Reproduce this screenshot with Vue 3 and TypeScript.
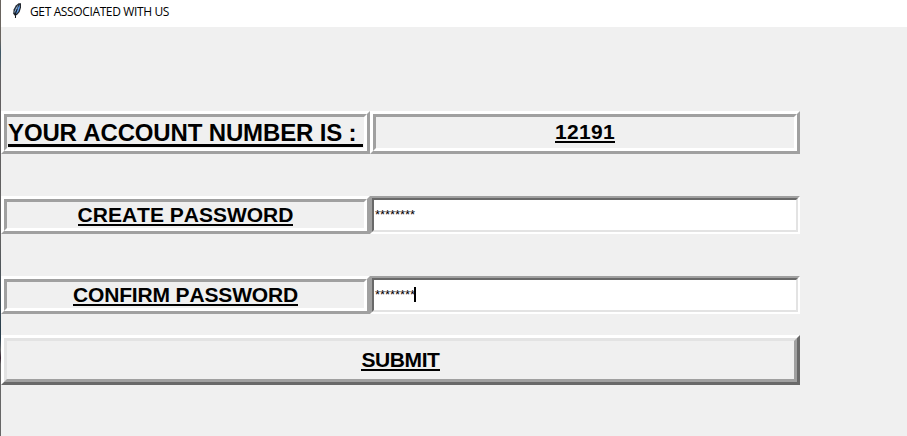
<script setup lang="ts">
import { ref } from 'vue'

const title = 'GET ASSOCIATED WITH US'
const accountNumber = ref('12191')
const password = ref('********')
const confirmation = ref('********')
</script>

<template>
  <div class="window">
    <header class="titlebar">
      <svg class="feather" width="10" height="16" viewBox="0 0 10 16">
        <path d="M7.6 0.2 L10 0.2 L10 4.6 L8.6 9 L6 12 L3.4 12.6 L2.2 10.6 L2.6 6.4 L4.8 2.6 Z" fill="#23282f" />
        <path d="M8.6 1.4 L8.8 4.6 L7.4 8.4 L5.2 11 L4.4 9.8 L7 5 Z" fill="#5f9ff0" />
        <path d="M7.4 1.6 L5 4.8 L3.4 8.5 L3.6 10 L6 6 Z" fill="#86a9d0" />
        <path d="M6.2 6 L4.8 10 L4.4 15" fill="none" stroke="#101318" stroke-width="1" />
      </svg>
      <span class="title">{{ title }}</span>
    </header>
    <main class="form">
      <div class="row account">
        <div class="ridge label"><span class="text big">YOUR ACCOUNT NUMBER IS :&nbsp;</span></div>
        <div class="ridge value"><span class="text number">{{ accountNumber }}</span></div>
      </div>
      <div class="row create">
        <div class="ridge label"><span class="text">CREATE PASSWORD</span></div>
        <div class="entry"><span class="mask">{{ password }}</span></div>
      </div>
      <div class="row confirm">
        <div class="ridge label"><span class="text tight">CONFIRM PASSWORD</span></div>
        <div class="entry"><span class="mask">{{ confirmation }}</span><i class="caret"></i></div>
      </div>
      <button class="submit" type="button"><span class="inner"><span class="text button-text">SUBMIT</span></span></button>
    </main>
  </div>
</template>

<style>
body {
  margin: 0;
  overflow: hidden;
}
</style>

<style scoped>
.window {
  box-sizing: border-box;
  width: 907px;
  height: 436px;
  background: linear-gradient(#69645f 0 40px, #3f5967 52px, #625f60 75px, #606060 240px, #263c4c 338px, #666 350px, #35202e 358px, #666 364px);
  padding-left: 1px;
  display: flex;
  flex-direction: column;
  font-family: "Liberation Sans", Arial, sans-serif;
  color: #000;
}
.titlebar {
  height: 27px;
  background: #fff;
  display: flex;
  align-items: flex-start;
}
.feather {
  margin: 3px 0 0 10px;
  flex: none;
}
.title {
  margin-left: 9px;
  font: 12px/24px "Open Sans", "Noto Sans", sans-serif;
  letter-spacing: -0.37px;
  white-space: nowrap;
}
.form {
  flex: 1;
  background: #f0f0f0;
  padding-top: 84px;
}
.row {
  display: grid;
  grid-template-columns: 369px 430px;
  width: 799px;
}
.account {
  height: 43px;
}
.create {
  height: 38px;
  margin-top: 42px;
}
.confirm {
  height: 38px;
  margin-top: 42px;
}
.ridge {
  box-sizing: border-box;
  border: 3px solid;
  border-color: #fff #a0a0a0 #a0a0a0 #fff;
  position: relative;
  display: flex;
  justify-content: center;
  align-items: flex-start;
}
.ridge::before {
  content: "";
  position: absolute;
  inset: 0;
  border: 3px solid;
  border-color: #a0a0a0 #fff #fff #a0a0a0;
}
.text {
  font-size: 21px;
  font-weight: bold;
  font-kerning: none;
  line-height: 24px;
  height: 21px;
  border-bottom: 2px solid #000;
  white-space: nowrap;
}
.label .text {
  margin-top: 4px;
}
.label .big {
  margin-top: 5px;
  font-size: 24px;
  line-height: 27px;
  height: 25px;
  border-bottom-width: 3px;
  letter-spacing: -0.15px;
}
.number {
  margin-top: 6px;
  letter-spacing: 0.32px;
}
.label .tight {
  letter-spacing: -0.15px;
}
.entry {
  box-sizing: border-box;
  border: 2px solid;
  border-color: #a0a0a0 #fff #fff #a0a0a0;
  background: #fff;
  position: relative;
  display: flex;
  align-items: flex-start;
  padding: 9px 0 0 3px;
}
.entry::before {
  content: "";
  position: absolute;
  inset: 0;
  border: 2px solid;
  border-color: #696969 #e3e3e3 #e3e3e3 #696969;
}
.mask {
  margin-top: -1px;
  font-size: 13px;
  line-height: 17px;
  letter-spacing: -0.06px;
}
.caret {
  width: 2px;
  height: 15px;
  background: #000;
  margin-left: -1px;
}
.submit {
  display: block;
  box-sizing: border-box;
  width: 799px;
  height: 50px;
  margin: 21px 0 0;
  padding: 0;
  border: 3px solid;
  border-color: #fff #696969 #696969 #fff;
  border-radius: 0;
  background: #f0f0f0;
  font-family: inherit;
  color: inherit;
}
.inner {
  box-sizing: border-box;
  height: 44px;
  border: 3px solid;
  border-color: #e3e3e3 #a0a0a0 #a0a0a0 #e3e3e3;
  display: flex;
  justify-content: center;
  align-items: flex-start;
}
.button-text {
  margin-top: 7px;
  letter-spacing: -0.4px;
}
</style>
